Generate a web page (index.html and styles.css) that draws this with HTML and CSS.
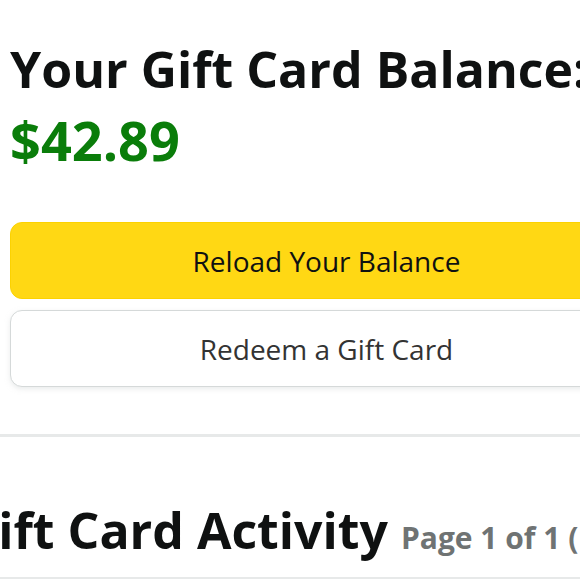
FILE: index.html
```html
<!DOCTYPE html>
<html>
<head>
<meta charset="utf-8">
<link rel="stylesheet" href="styles.css">
</head>
<body>
<div class="page">
  <section class="balance">
    <h1 class="title">Your Gift Card Balance:</h1>
    <div class="amount">$42.89</div>
    <div class="actions">
      <button class="btn btn-primary">Reload Your Balance</button>
      <button class="btn btn-secondary">Redeem a Gift Card</button>
    </div>
  </section>
  <section class="activity">
    <h2 class="activity-title">Gift Card Activity <span class="page-info">Page 1 of 1 (1 Activities)</span></h2>
  </section>
</div>
</body>
</html>
```
FILE: styles.css
```css
html, body {
  margin: 0;
  padding: 0;
  background: #ffffff;
  overflow: hidden;
}
.page {
  width: 580px;
  height: 580px;
  overflow: hidden;
  font-family: "Open Sans", "Noto Sans", sans-serif;
  color: #0f1111;
}
.balance {
  padding: 37px 0 47px 10px;
  border-bottom: 3px solid #e7e9e9;
}
.title {
  margin: 0;
  font-size: 50px;
  font-weight: 700;
  line-height: 64px;
  white-space: nowrap;
}
.amount {
  margin-top: 9px;
  font-size: 54px;
  font-weight: 700;
  line-height: 60px;
  color: #0a7d0a;
}
.actions {
  margin-top: 52px;
  width: 633px;
  display: flex;
  flex-direction: column;
  gap: 11px;
}
.btn {
  font-family: "Open Sans", "Noto Sans", sans-serif;
  font-size: 28px;
  color: #0f1111;
  border-radius: 12px;
  height: 77px;
  width: 100%;
  padding: 0;
  cursor: pointer;
}
.btn-primary {
  background: #ffd814;
  border: 1px solid #fcd200;
}
.btn-secondary {
  background: #ffffff;
  border: 1px solid #d5d9d9;
  box-shadow: 0 2px 5px rgba(213, 217, 217, 0.5);
  color: #333333;
}
.activity {
  padding: 61px 0 0 0;
  border-bottom: 2px solid #e7e9e9;
  height: 79px;
}
.activity-title {
  margin: 0 0 0 -38px;
  font-size: 50px;
  font-weight: 700;
  line-height: 64px;
  white-space: nowrap;
}
.page-info {
  font-size: 30px;
  color: #6f7373;
}
```
